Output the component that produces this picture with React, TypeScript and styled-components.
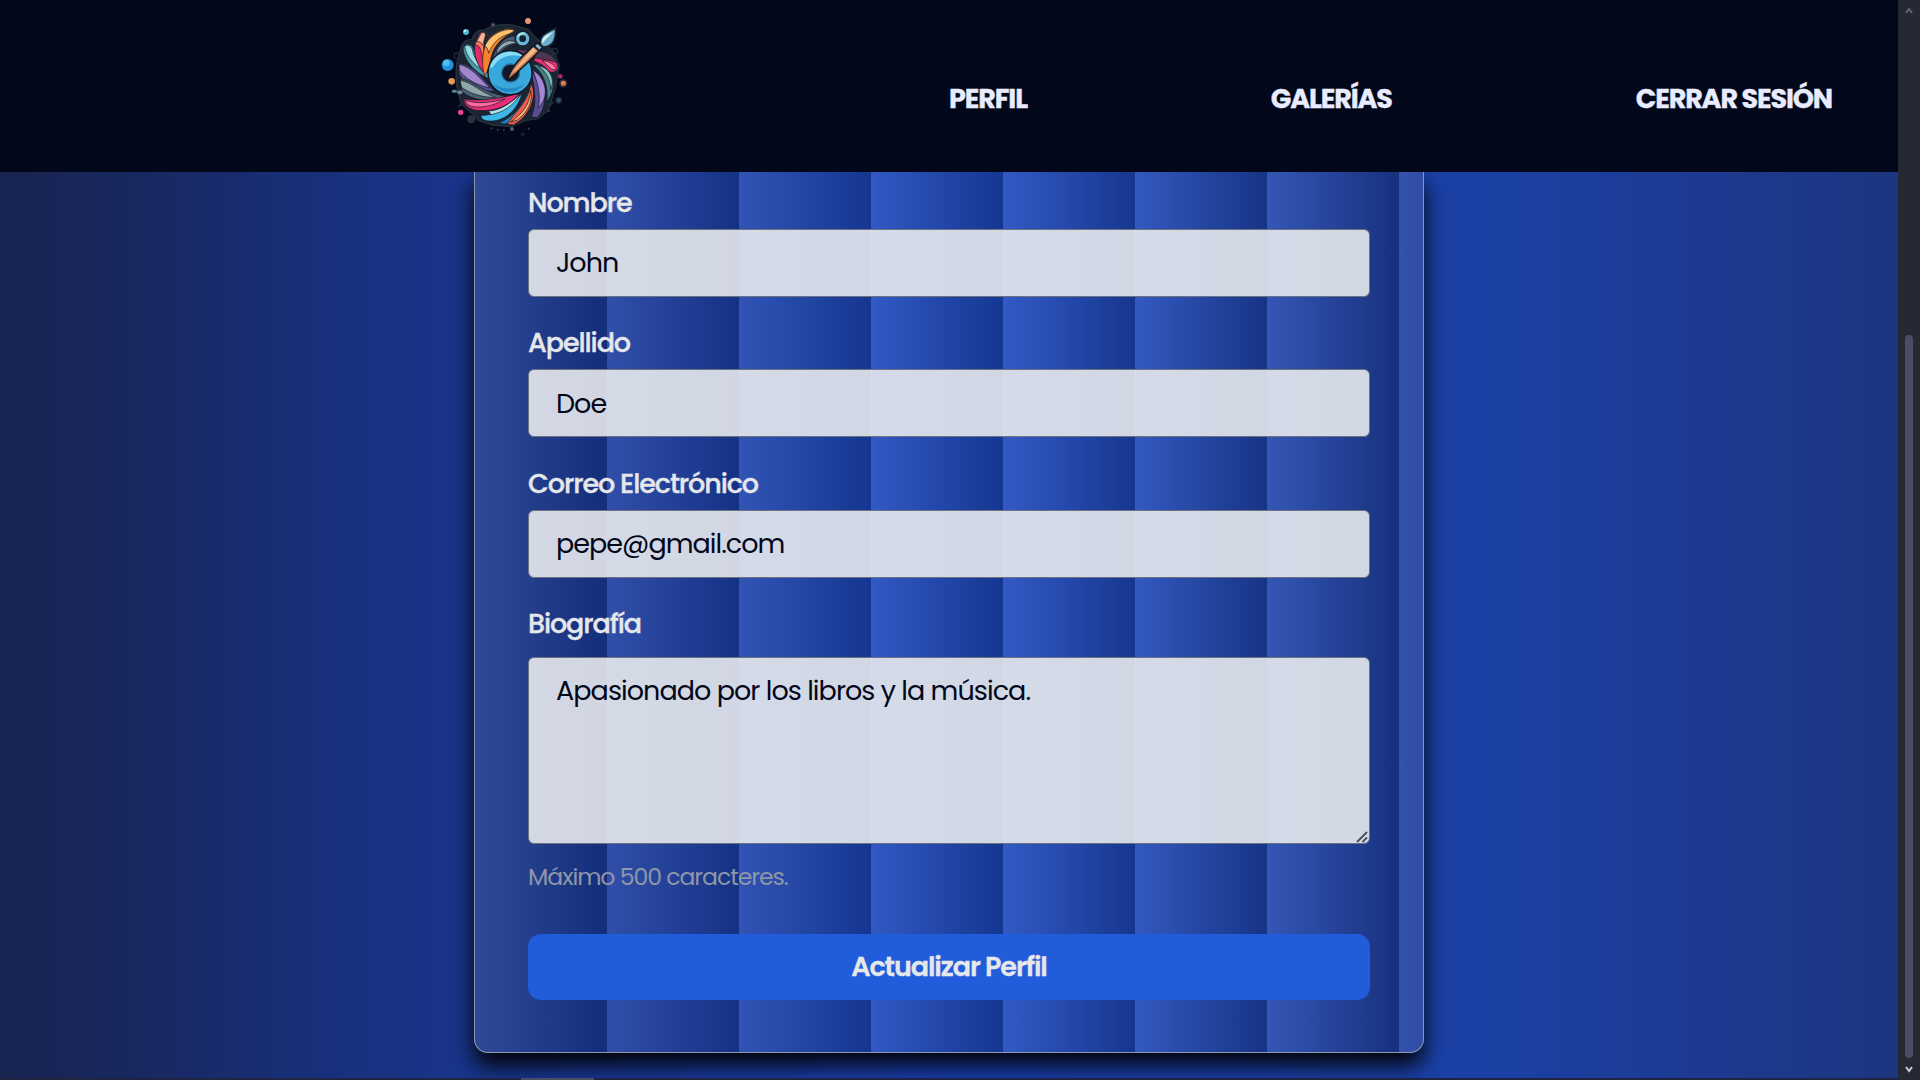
import React from "react";
import styled, { createGlobalStyle } from "styled-components";

const Global = createGlobalStyle`
  * { box-sizing: border-box; }
  html, body { margin: 0; height: 100%; overflow: hidden; }
  body, input, textarea, button { font-family: Poppins, Inter, "Open Sans", sans-serif; }
`;

const Screen = styled.div`
  width: 1920px;
  height: 1080px;
  display: grid;
  grid-template-columns: 1898px 22px;
  grid-template-rows: 1078px 2px;
  overflow: hidden;
  background: #1f2238;
`;

const Page = styled.div`
  display: flex;
  flex-direction: column;
  overflow: hidden;
  background: linear-gradient(90deg, #182450 0, #182861 150px, #182f78 300px, #19358c 475px, #1b40b4 949px, #1b40a4 1510px, #1c3a92 1690px, #1c367f 1898px);
`;

const Header = styled.header`
  height: 172px;
  flex: none;
  display: flex;
  align-items: flex-start;
  background: #02071a;
  position: relative;
  z-index: 1;
`;

const Brand = styled.a`
  margin: 10px 0 0 430px;
  width: 150px;
  height: 130px;
  flex: none;
`;

const Nav = styled.nav`
  flex: 1;
  display: flex;
  justify-content: space-between;
  padding: 79px 66px 0 369px;
`;

const NavLink = styled.a`
  font-size: 27px;
  line-height: 40px;
  font-weight: 700;
  color: #e9ebff;
  white-space: nowrap;
  letter-spacing: -1.13px;
  -webkit-text-stroke: 0.3px currentColor;
`;

const Card = styled.form`
  width: 950px;
  height: 881px;
  margin: 0 auto;
  padding: 10px 53px 0;
  flex: none;
  border: 1px solid #8d96ad;
  border-top: 0;
  border-radius: 0 0 14px 14px;
  box-shadow: 0 13px 22px rgba(0, 0, 0, 0.95);
  background:
    repeating-linear-gradient(90deg, rgba(255,255,255,0.1) 0, rgba(0,0,0,0.23) 132px),
    linear-gradient(90deg, #17358a 0, #193b9f 132px, #1a40ac 264px, #1a46bd 396px, #1c47bd 600px, #1d43ae 790px, #1d3fa2 948px);
`;

const Field = styled.label<{ $h: number }>`
  display: flex;
  flex-direction: column;
  height: ${(p) => p.$h}px;
`;

const Caption = styled.span<{ $gap: number }>`
  font-size: 27px;
  line-height: 42px;
  font-weight: 500;
  color: #e5e7eb;
  letter-spacing: -1.09px;
  -webkit-text-stroke: 0.35px currentColor;
  margin-bottom: ${(p) => p.$gap}px;
`;

const Input = styled.input<{ $drop?: number }>`
  height: 68px;
  padding: ${(p) => p.$drop ?? 0}px 27px 0;
  border: 1px solid #6b7280;
  border-radius: 6px;
  background: rgba(231, 233, 237, 0.9);
  color: #02071a;
  font-size: 27px;
  letter-spacing: -0.98px;
  outline: none;
`;

const AreaWrap = styled.div`
  position: relative;
  display: flex;
`;

const Area = styled.textarea`
  flex: 1;
  height: 187px;
  padding: 12px 27px;
  border: 1px solid #6b7280;
  border-radius: 6px;
  background: rgba(231, 233, 237, 0.9);
  color: #02071a;
  font-family: inherit;
  font-size: 27px;
  line-height: 41px;
  letter-spacing: -0.94px;
  outline: none;
  resize: none;
`;

const Grip = styled.svg`
  position: absolute;
  right: 2px;
  bottom: 1px;
`;

const Hint = styled.p`
  margin: 14px 0 0;
  height: 76px;
  font-size: 23.6px;
  line-height: 38px;
  font-weight: 400;
  letter-spacing: -1.06px;
  color: #8e96a8;
`;

const Submit = styled.button`
  display: block;
  width: 100%;
  height: 66px;
  border: 0;
  border-radius: 13px;
  background: #215cda;
  color: #e5e7eb;
  font-size: 27px;
  font-weight: 600;
  letter-spacing: -1.1px;
  -webkit-text-stroke: 0.3px currentColor;
`;

const Scrollbar = styled.div`
  grid-column: 2;
  grid-row: 1 / 3;
  background: #252934;
  display: flex;
  flex-direction: column;
  align-items: center;
  padding: 8px 0 6px;
`;

const Thumb = styled.div`
  width: 8px;
  height: 723px;
  margin: 320px 0 8px;
  border-radius: 4px;
  background: #4a4d63;
`;

const BottomEdge = styled.div`
  padding-left: 521px;
  background: #1f2540;
`;

const BottomTab = styled.div`
  width: 73px;
  height: 2px;
  background: #4a4d63;
`;

function Logo() {
  return (
    <svg width="150" height="130" viewBox="0 0 450 390" fill="none" strokeLinecap="round" strokeLinejoin="round">
      <path d="M96 106Q104 88 126 88Q134 60 162 60Q200 38 252 46L295 58L322 88L352 108L372 126L388 165L376 235L355 300L324 326L284 332L244 350L188 345L147 332L120 304L94 282L82 240L78 200L80 160Z" fill="#1b2431" stroke="#27313d" strokeWidth="4" />
      <g stroke="#111927" strokeWidth="2">
        <path d="M178 206C128 188 96 138 100 110Q112 94 128 110C138 142 158 176 182 196Z" fill="#4b98a8" />
        <path d="M104 108Q118 100 127 117C130 142 147 163 162 183C130 165 106 135 104 108Z" fill="#93dce2" />
        <path d="M160 186C138 160 130 120 137 96L150 70Q164 58 168 76C156 112 162 145 172 172Z" fill="#f7765f" />
        <path d="M158 184C136 157 132 125 134 106Q149 102 154 128L163 176Z" fill="#e52a6c" />
        <path d="M140 95L153 70Q165 62 166 77L158 106Q152 92 140 95Z" fill="#ffb08f" />
        <path d="M163 198C150 142 162 92 192 72C218 54 252 50 254 64C226 78 204 94 190 122C178 150 182 172 163 198Z" fill="#f58227" />
        <path d="M164 108C180 72 222 54 252 59Q252 67 234 73C205 82 189 99 176 130Q174 112 164 108Z" fill="#ffc06d" />
        <path d="M184 158C196 106 224 78 254 78Q262 86 267 100C238 103 215 118 198 142Z" fill="#4a5c6f" />
        <path d="M200 122C216 92 243 84 264 100C242 99 219 107 202 130Z" fill="#93a7ae" />
        <path d="M86 160C132 164 158 208 194 244C146 246 98 222 87 190Z" fill="#54508c" />
        <path d="M88 163C126 172 148 205 180 234C141 226 100 204 88 180Z" fill="#a486ca" />
        <path d="M90 207C124 206 150 246 226 258C195 278 130 276 96 244Z" fill="#4a6070" />
        <path d="M91 211C125 216 150 246 196 262C162 264 118 250 95 232Z" fill="#92a6aa" />
        <path d="M102 266C145 276 210 266 268 250C240 290 187 308 133 300Q98 290 102 266Z" fill="#e92c78" />
        <path d="M105 270C140 285 190 276 225 267C190 290 140 298 114 285Z" fill="#ff6d9b" />
        <path d="M152 316C190 318 235 296 276 250C262 306 215 340 169 332Q154 330 152 316Z" fill="#3db6e8" />
        <path d="M176 303C214 302 246 275 272 252C249 289 220 306 184 314Z" fill="#b1e1e5" />
        <path d="M205 340C250 320 280 286 294 244C294 294 266 333 225 342Z" fill="#187fb7" />
        <path d="M232 343C250 308 292 284 303 222C326 262 292 325 251 344Z" fill="#ee5d4c" />
        <path d="M242 336C280 308 298 285 302 242C310 270 296 306 262 330Z" fill="#ffad69" />
        <path d="M304 320C322 278 314 238 304 188C340 206 364 274 323 322Z" fill="#5b4b92" />
        <path d="M324 294C334 263 324 217 308 180C350 204 360 264 324 294Z" fill="#a586d5" />
        <path d="M350 276C358 224 336 184 308 164C360 158 394 220 350 276Z" fill="#477f86" />
        <path d="M362 238C362 206 344 180 324 168C356 170 378 206 362 238Z" fill="#8bbfbb" />
        <path d="M318 135C343 126 388 143 384 177Q372 194 354 182C344 166 327 160 312 153Z" fill="#e52f73" />
        <path d="M338 152C360 154 374 164 379 177Q370 184 360 174Z" fill="#ff779d" />
        <path d="M315 127C333 116 372 134 382 158C358 148 342 150 315 143Z" fill="#4d3854" />
        <path d="M264 118L304 122L288 136L268 126Z" fill="#6d3658" />
      </g>
      <circle cx="240" cy="188" r="66" fill="#38a8dd" stroke="#101725" strokeWidth="4" />
      <path d="M180 174C190 126 248 110 284 142C250 130 212 134 188 172Z" fill="#8edcf1" />
      <path d="M191 222Q236 250 285 221Q261 249 229 246Q204 240 191 222" fill="#2686c9" />
      <circle cx="242" cy="189" r="27" fill="#111827" stroke="#1d6f9e" strokeWidth="4" />
      <path d="M232 211C238 184 260 150 311 108L328 123C294 157 258 193 232 211Z" fill="#c97f58" stroke="#151923" strokeWidth="5" />
      <path d="M245 190L309 112L319 122L258 181Z" fill="#f5bb82" />
      <path d="M322 99L337 112L328 122L313 108Z" fill="#89b4c6" stroke="#111827" strokeWidth="4" />
      <path d="M331 103C328 73 356 66 377 54C378 87 370 112 340 111Z" fill="#69aecb" stroke="#18202c" strokeWidth="5" />
      <path d="M336 95C337 77 357 72 370 65C357 79 345 88 338 100Z" fill="#d5f2f2" />
      <circle cx="278" cy="86" r="25" fill="#18212f" />
      <circle cx="278" cy="86" r="15" fill="#18212f" stroke="#69b6d5" strokeWidth="10" />
      <path d="M263 80Q270 68 284 70" stroke="#bce9ef" strokeWidth="4" />
      <circle cx="53" cy="165" r="18" fill="#2191df" /><circle cx="49" cy="159" r="10" fill="#52bdeb" />
      <circle cx="108" cy="66" r="9" fill="#50b6cd" /><circle cx="105" cy="63" r="4" fill="#b6eee9" />
      <circle cx="294" cy="33" r="9" fill="#e79776" /><circle cx="189" cy="45" r="6" fill="#725570" stroke="#252b3d" strokeWidth="4" />
      <circle cx="65" cy="214" r="10" fill="#e69a50" /><circle cx="92" cy="307" r="8" fill="#ed468d" />
      <circle cx="391" cy="199" r="7" fill="#a12b5f" /><circle cx="400" cy="220" r="10" fill="#ef7848" stroke="#30323e" strokeWidth="5" />
      <circle cx="386" cy="271" r="7" fill="#286a7d" stroke="#27333e" strokeWidth="6" />
      <circle cx="124" cy="328" r="12" fill="#27313b" /><circle cx="246" cy="357" r="6" fill="#4b626c" /><circle cx="278" cy="373" r="5" fill="#1b2630" />
      <circle cx="374" cy="124" r="9" stroke="#252e3b" strokeWidth="4" />
      <circle cx="80" cy="137" r="8" stroke="#202938" strokeWidth="4" />
      <path d="M70 244H76" stroke="#558894" strokeWidth="9" /><path d="M87 247H92" stroke="#71858c" strokeWidth="11" />
      <path d="M184 355H185M203 359H204M221 360H222M297 355V356M357 302V304" stroke="#3d4a55" strokeWidth="5" />
      <path d="M99 278L85 290M176 82L170 66M360 287L370 276" stroke="#29323e" strokeWidth="4" />
    </svg>
  );
}

function Arrow({ down }: { down?: boolean }) {
  return (
    <svg width="8" height="7" viewBox="0 0 8 7" fill="none" stroke={down ? "#c9cbd0" : "#656770"} strokeWidth="2">
      <path d={down ? "M1 1L4 5L7 1" : "M1 5L4 1L7 5"} />
    </svg>
  );
}

export default function App() {
  return (
    <Screen>
      <Global />
      <Page>
        <Header>
          <Brand><Logo /></Brand>
          <Nav>
            <NavLink>PERFIL</NavLink>
            <NavLink>GALERÍAS</NavLink>
            <NavLink>CERRAR SESIÓN</NavLink>
          </Nav>
        </Header>
        <Card>
          <Field $h={140}>
            <Caption $gap={5}>Nombre</Caption>
            <Input defaultValue="John" />
          </Field>
          <Field $h={141}>
            <Caption $gap={5}>Apellido</Caption>
            <Input $drop={1} defaultValue="Doe" />
          </Field>
          <Field $h={140}>
            <Caption $gap={5}>Correo Electrónico</Caption>
            <Input defaultValue="pepe@gmail.com" />
          </Field>
          <Field $h={241}>
            <Caption $gap={12}>Biografía</Caption>
            <AreaWrap>
              <Area defaultValue="Apasionado por los libros y la música." />
              <Grip width="12" height="12" viewBox="0 0 12 12" stroke="#4b4e58" strokeWidth="1.8">
                <path d="M1 11L11 1M6.5 11L11 6.5" />
              </Grip>
            </AreaWrap>
          </Field>
          <Hint>Máximo 500 caracteres.</Hint>
          <Submit type="button">Actualizar Perfil</Submit>
        </Card>
      </Page>
      <Scrollbar><Arrow /><Thumb /><Arrow down /></Scrollbar>
      <BottomEdge><BottomTab /></BottomEdge>
    </Screen>
  );
}
